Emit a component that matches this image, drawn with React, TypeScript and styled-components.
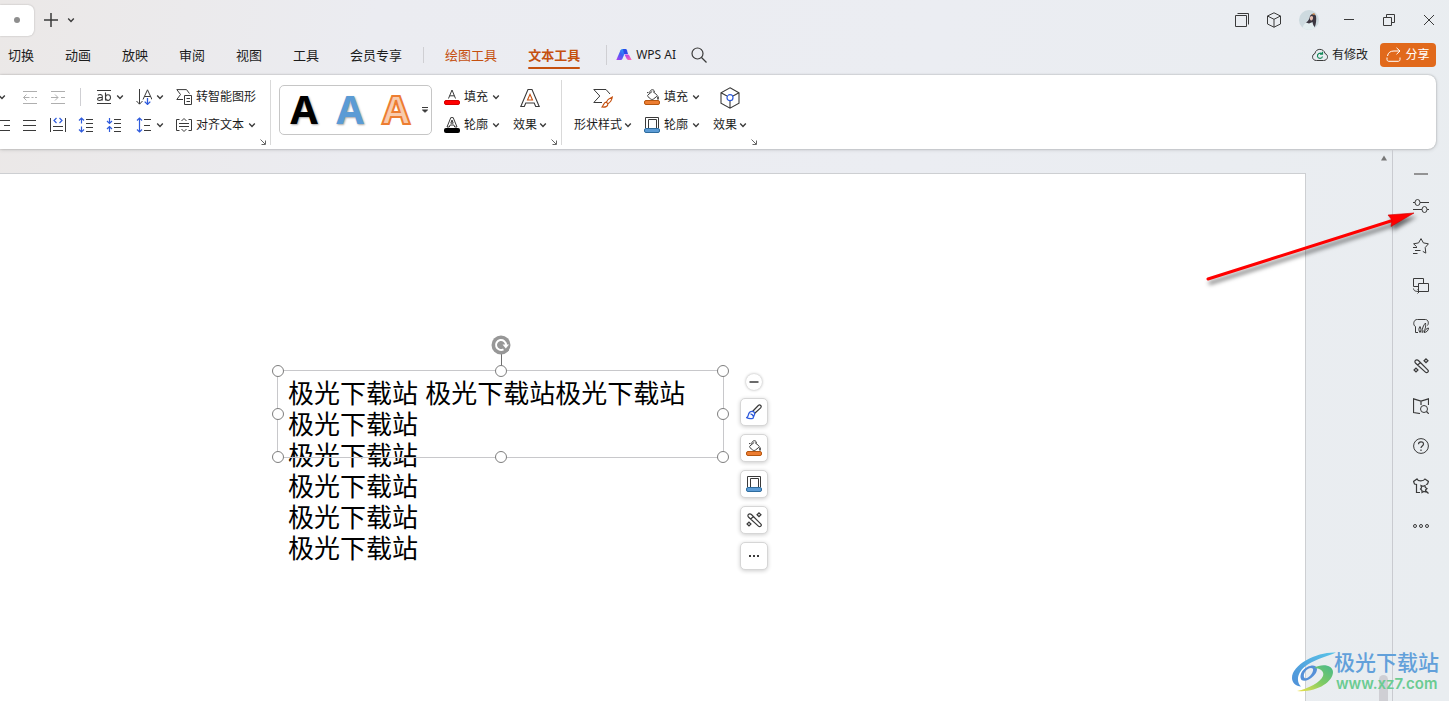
import React from "react";
import styled, { createGlobalStyle, css } from "styled-components";

const GlobalStyle = createGlobalStyle`
  *, *::before, *::after { box-sizing: border-box; }
  html, body { margin: 0; height: 100%; }
  #root { height: 100%; }
  body {
    overflow: hidden;
    color: #1c1c1c;
    font: 12px/16px "Noto Sans", "Noto Sans CJK SC", sans-serif;
  }
  button { font: inherit; color: inherit; background: none; border: 0; padding: 0; }
`;

const ink = "#3a3a3a";
const blue = "#2f5bdc";
const rust = "#c5500f";

const Window = styled.div`
  display: flex;
  flex-direction: column;
  height: 100%;
  min-height: 600px;
  background: linear-gradient(100deg, #ebe8e7 0%, #ebecf1 24%, #ebedf2 60%, #e9edf0 100%);
`;

/* ---------- title bar ---------- */
const TitleBar = styled.header`
  display: flex;
  align-items: center;
  flex: none;
  height: 40px;
`;
const DocTab = styled.button`
  width: 34px;
  height: 31px;
  display: flex;
  align-items: center;
  justify-content: center;
  background: #fff;
  border-radius: 0 6px 6px 0;
  box-shadow: 0 0 2px rgba(0, 0, 0, 0.25);
  margin-right: 7px;
`;
const UnsavedDot = styled.span`
  width: 6px;
  height: 6px;
  border-radius: 50%;
  background: #8e8e8e;
`;
const BarButton = styled.button<{ $w: number }>`
  width: ${(p) => p.$w}px;
  height: 32px;
  display: flex;
  align-items: center;
  justify-content: center;
`;
const Spacer = styled.div`
  flex: 1;
`;

/* ---------- menu ---------- */
const MenuBar = styled.nav`
  display: flex;
  align-items: center;
  flex: none;
  height: 35px;
  padding: 0 13px 5px 8px;
  font-size: 13px;
`;
const MenuTabs = styled.div`
  display: flex;
  align-items: center;
  gap: 31px;
`;
const MenuTab = styled.button<{ $accent?: boolean; $active?: boolean }>`
  position: relative;
  height: 30px;
  white-space: nowrap;
  color: ${(p) => (p.$accent ? rust : "#1c1c1c")};
  ${(p) =>
    p.$active &&
    css`
      font-weight: 700;
      &::after {
        content: "";
        position: absolute;
        left: 0;
        right: 0;
        bottom: 1px;
        height: 2px;
        border-radius: 1px;
        background: ${rust};
      }
    `}
`;
const Rule = styled.span<{ $h: number; $l: number; $r: number }>`
  flex: none;
  width: 1px;
  height: ${(p) => p.$h}px;
  margin: 0 ${(p) => p.$r}px 0 ${(p) => p.$l}px;
  background: #cfcfd3;
`;
const MenuAction = styled.button`
  display: flex;
  align-items: center;
  gap: 4px;
  height: 24px;
  font-size: 12px;
  white-space: nowrap;
`;
const ShareButton = styled(MenuAction)`
  width: 56px;
  margin-left: 12px;
  justify-content: center;
  gap: 3px;
  color: #fff;
  background: #e1691b;
  border-radius: 4px;
`;

/* ---------- ribbon ---------- */
const Ribbon = styled.section`
  display: flex;
  flex: none;
  height: 74px;
  margin-right: 13px;
  padding-top: 5px;
  background: #fff;
  border-radius: 0 8px 8px 0;
  box-shadow: 0 0 2px rgba(0, 0, 0, 0.3), 0 1px 4px rgba(0, 0, 0, 0.12);
  overflow: hidden;
`;
const Group = styled.div<{ $line?: boolean }>`
  position: relative;
  display: flex;
  align-items: flex-start;
  flex: none;
  height: 65px;
  padding: 3px 8px 0 6px;
  border-right: 1px solid ${(p) => (p.$line ? "#d9d9d9" : "transparent")};
`;
const Rows = styled.div<{ $shift?: boolean }>`
  display: flex;
  flex-direction: column;
  margin: ${(p) => (p.$shift ? "0 0 0 -18px" : "0 1px 0 0")};
`;
const Row = styled.div`
  display: flex;
  align-items: center;
  height: 28px;
`;
const Cluster = styled.div`
  display: flex;
  align-items: center;
`;
const WideCluster = styled(Cluster)`
  margin-right: 2px;
`;
const Tool = styled.button<{ $only?: boolean; $muted?: boolean }>`
  display: flex;
  align-items: center;
  justify-content: ${(p) => (p.$only ? "center" : "flex-start")};
  gap: 4px;
  height: 26px;
  ${(p) => (p.$only ? "width: 28px;" : "padding: 0 6px;")}
  white-space: nowrap;
  opacity: ${(p) => (p.$muted ? 0.4 : 1)};
`;
const TallTool = styled.button`
  display: flex;
  flex-direction: column;
  align-items: center;
  height: 56px;
  padding: 3px 6px 0;
  gap: 7px;
  white-space: nowrap;
`;
const TallLabel = styled.span`
  display: flex;
  align-items: center;
  gap: 2px;
`;
const Launcher = styled.button`
  position: absolute;
  right: 3px;
  bottom: -1px;
  width: 8px;
  height: 8px;
  display: flex;
`;
const Gallery = styled.div`
  display: flex;
  align-items: center;
  height: 50px;
  margin: 2px 6px 0 2px;
  padding-left: 1px;
  border: 1px solid #c6c6c6;
  border-radius: 5px;
`;
const Preset = styled.button<{ $fill: string; $outline?: string }>`
  width: 46px;
  height: 48px;
  padding-bottom: 2px;
  font: 700 40px/46px "Noto Sans", sans-serif;
  text-align: center;
  color: ${(p) => p.$fill};
  text-shadow: ${(p) => (p.$outline ? "none" : "1px 1px 2px rgba(0,0,0,.35)")};
  -webkit-text-stroke: ${(p) => (p.$outline ? `2px ${p.$outline}` : "0")};
`;
const GalleryMore = styled.button`
  width: 12px;
  height: 48px;
  display: flex;
  align-items: center;
  justify-content: center;
`;

/* ---------- workspace ---------- */
const Workspace = styled.main`
  position: relative;
  display: flex;
  flex: 1;
  min-height: 0;
`;
const Slide = styled.div`
  position: relative;
  flex: 1;
  margin-top: 24px;
  background: #fff;
  border: solid #cdcfd2;
  border-width: 1px 1px 0 0;
`;
const ScrollLane = styled.div`
  width: 86px;
  display: flex;
  flex-direction: column;
  align-items: flex-end;
  justify-content: space-between;
  padding: 6px 4px 0 0;
`;
const ScrollUp = styled.button`
  width: 8px;
  height: 6px;
  display: flex;
`;
const Thumb = styled.span`
  width: 9px;
  height: 26px;
  background: #cfcfd4;
  border-radius: 5px 5px 0 0;
`;
const SidePanel = styled.aside`
  width: 57px;
  border-left: 1px solid #c9cbd0;
  display: flex;
  flex-direction: column;
  align-items: center;
  padding-top: 13px;
`;
const SideCollapse = styled.button`
  width: 24px;
  height: 24px;
  display: flex;
  align-items: center;
  justify-content: center;
`;
const SideButton = styled.button`
  width: 40px;
  height: 40px;
  display: flex;
  align-items: center;
  justify-content: center;
`;

const SlideText = styled.div`
  position: absolute;
  left: 288px;
  top: 205px;
  color: #000;
  font: 400 26px/31px "Liberation Sans", "Noto Sans CJK SC", sans-serif;
  white-space: nowrap;
`;
const Paragraph = styled.p`
  margin: 0;
`;
const Frame = styled.div`
  position: absolute;
  left: 277px;
  top: 196px;
  width: 447px;
  height: 88px;
  border: 1px solid #c8c8cb;
`;
const Handle = styled.span<{ $x: number; $y: number }>`
  position: absolute;
  left: ${(p) => p.$x}%;
  top: ${(p) => p.$y}%;
  width: 12px;
  height: 12px;
  margin: -6px;
  border: 1px solid #7e7e7e;
  border-radius: 50%;
  background: #fff;
`;
const RotateHandle = styled.button`
  position: absolute;
  left: 50%;
  top: -36px;
  width: 20px;
  height: 36px;
  margin-left: -10px;
  display: flex;
`;
const FloatBar = styled.div`
  position: absolute;
  left: 740px;
  top: 200px;
  display: flex;
  flex-direction: column;
  align-items: center;
  gap: 8px;
`;
const FloatCollapse = styled.button`
  width: 16px;
  height: 16px;
  display: flex;
  align-items: center;
  justify-content: center;
  background: #fff;
  border-radius: 50%;
  box-shadow: 0 0 3px rgba(0, 0, 0, 0.35);
`;
const FloatButton = styled.button`
  width: 28px;
  height: 28px;
  display: flex;
  align-items: center;
  justify-content: center;
  background: #fff;
  border: 1px solid #d6d6d6;
  border-radius: 5px;
  box-shadow: 0 1px 4px rgba(0, 0, 0, 0.2);
`;
const Pointer = styled.svg`
  position: absolute;
  right: 25px;
  top: 51px;
  pointer-events: none;
  filter: drop-shadow(2px 4px 2px rgba(0, 0, 0, 0.55));
`;
const Watermark = styled.a`
  position: absolute;
  right: 10px;
  bottom: 7px;
  display: flex;
  align-items: flex-end;
  text-decoration: none;
  white-space: nowrap;
`;
const WatermarkText = styled.span`
  display: flex;
  flex-direction: column;
  margin-left: -4px;
`;
const WatermarkName = styled.span`
  color: #62a0da;
  font: 500 21px/26px "Noto Sans CJK SC", sans-serif;
`;
const WatermarkSite = styled.span`
  padding-left: 2px;
  color: #6bcb92;
  font: 600 15px/20px Inter, sans-serif;
`;

/* ---------- icons ---------- */
type IconProps = { children: React.ReactNode; s?: number; box?: string; color?: string };
const Svg = styled.svg`
  flex: none;
`;
const Icon = ({ children, s = 16, box = "0 0 16 16", color = ink }: IconProps) => (
  <Svg width={s} height={s} viewBox={box} fill="none" stroke={color} strokeWidth={1} aria-hidden="true">
    {children}
  </Svg>
);
const Chevron = () => (
  <Icon s={8} box="0 0 8 8"><path d="M1.2 2.6 4 5.4 6.8 2.6" strokeWidth="1.4" /></Icon>
);
const OutdentIcon = () => <Icon><path d="M1 2.5h14M1 14.5h14M1.5 8.5h6M9.5 8.5h2M13 8.5h2M4.5 5.5l-3 3 3 3" /></Icon>;
const IndentIcon = () => <Icon><path d="M1 2.5h14M1 14.5h14M1 8.5h7M11 8.5h4M5 5.5l3 3-3 3" /></Icon>;
const ListCutIcon = () => <Icon><path d="M6 3.5h10M10 8.5h6M6 13.5h10" /></Icon>;
const LinesIcon = () => <Icon><path d="M1 3.5h13M1 8.5h13M1 13.5h13" /></Icon>;
const StrikeAbIcon = () => (
  <Icon>
    <path d="M1 1.5h14M1 14.5h14" />
    <path d="M2 6.4c1-1.2 4.3-1.2 4.3.8v4.3M6.3 8.5c-2-.2-4.700 0-4.700 1.500 0 2 3.700 2 4.700-.2M9.500 3.500v8M9.500 8.600c0-3.800 5-3.800 5 0s-5 3.700-5 0" strokeWidth="1.1" />
  </Icon>
);
const SortIcon = () => (
  <Icon>
    <path d="M3.500 0v15M.5 12l3 3.200 3-3.200M7 10.500 11.500.8 16 10.500M8.500 7.500h6" />
    <path d="M11.500 9v6.500M8.700 12.600l2.800 2.800 2.800-2.800" stroke={blue} strokeWidth="1.3" />
  </Icon>
);
const SmartIcon = () => (
  <Icon>
    <path d="M7 10.500H.8l3.700-5L.8.600h9.700l3 4" />
    <path d="M8.500 6.500h7v9h-7zM10.500 9.500h3.500M10.500 12.500h3.500" />
  </Icon>
);
const DistributeIcon = () => (
  <Icon>
    <path d="M.5 1v14M15.500 1v14M3 9.500h10M3 13.500h10" />
    <path d="M6.500 1 4 3.500 6.500 6M9.500 1 12 3.500 9.500 6" stroke={blue} strokeWidth="1.2" />
  </Icon>
);
const SpaceUpIcon = () => (
  <Icon>
    <path d="M8 2.500h7M8 6.500h7M8 10.500h7M8 14.500h7" />
    <path d="M3.500 1v5.500M1 3.500 3.500 1 6 3.500M3.500 9.500V15M1 12.500 3.500 15 6 12.500" stroke={blue} strokeWidth="1.2" />
  </Icon>
);
const SpaceDownIcon = () => (
  <Icon>
    <path d="M8 2.500h7M8 6.500h7M8 10.500h7M8 14.500h7" />
    <path d="M3.500 1v5.500M1 4 3.500 6.500 6 4M3.500 9.500V15M1 12 3.500 9.500 6 12" stroke={blue} strokeWidth="1.2" />
  </Icon>
);
const LineHeightIcon = () => (
  <Icon>
    <path d="M8 2.500h7M8 8.500h6M8 13.500h7" />
    <path d="M3.500 1v14M1 3.500 3.500 1 6 3.500M1 12.500 3.500 15 6 12.500" stroke={blue} strokeWidth="1.2" />
  </Icon>
);
const AlignTextIcon = () => (
  <Icon>
    <path d="M3.500 2.500h-3v11h3M12.500 2.500h3v11h-3M3 6.500h10M3 9.500h10M5.500 4 8 1.500 10.500 4M5.500 12 8 14.500 10.500 12" />
  </Icon>
);
const TextFillIcon = () => (
  <Icon>
    <path d="M4.500 9.500 8 1l3.500 8.500M5.700 6.800h4.600" />
    <rect x=".5" y="11.500" width="15" height="4" rx="1.500" fill="#f00" stroke="#d40000" />
  </Icon>
);
const TextOutlineIcon = () => (
  <Icon>
    <path d="M3 10 6.800.6h2.400L13 10h-2.300l-.8-2H6.100l-.8 2zM6.800 6.200 8 3l1.200 3.200z" />
    <rect x="0" y="11" width="16" height="5" rx="2" fill="#000" stroke="none" />
  </Icon>
);
const TextEffectIcon = () => (
  <Icon s={24} box="-2 -2 24 24">
    <path d="M.8 18.500 8 1.500h4l7.200 17h-3.500l-1.500-3.500H5.800l-1.500 3.500z" strokeWidth="1.100" />
    <path d="M7.500 12 10 6.300l2.500 5.700z" stroke={rust} strokeWidth="1.100" />
  </Icon>
);
const ShapeStyleIcon = () => (
  <Icon s={24} box="-2 -2 24 24">
    <path d="M9 14.500H.8l6-6.500-6-6.500H13l4 4.500" />
    <path d="M19.300 9c-2.500 1-5 3.300-6 5.200l1.600 1.500c2.100-1.200 4-4 4.400-6.700zM13.300 14.200c-2.300-.3-2.300 2.300-4.300 4.800 3 .5 6-.5 5.900-3.300" stroke={rust} strokeWidth="1.200" />
  </Icon>
);
const ShapeFillIcon = () => (
  <Icon>
    <path d="M9 2.600 12.800 5.800c.6.500.6 1 .1 1.500L9.500 10c-1 .7-2 .6-2.800 0L4 7.700c-.6-.6-.6-1.200 0-1.800L8.200 2.400M3 3.600h1.500M5.500 3.600C6.300 1.500 7.200.6 8.500.7c1.300.1 2 1.100 2 2.500" />
    <path d="M14 7.500v3" strokeWidth="1.600" />
    <rect x=".5" y="11.500" width="15" height="4" rx="1.500" fill="#ed7d31" stroke="#b5560f" />
  </Icon>
);
const ShapeOutlineIcon = () => (
  <Icon>
    <path d="M1.500 11V.5h13V11M4.500 11V2.500h8V11" />
    <rect x=".5" y="11.500" width="15" height="4" rx="1.500" fill="#5b9bd5" stroke="#2e6c9e" />
  </Icon>
);
const ShapeEffectIcon = () => (
  <Icon s={24} box="-1 -1 24 24">
    <path d="M11 .8 20 5.800v10.400l-9 5-9-5V5.800zM2 5.800l6 3.200M20 5.800 14 9M11 14v7" strokeWidth="1.100" />
    <circle cx="11" cy="10.700" r="3" stroke={blue} strokeWidth="1.200" />
  </Icon>
);
const LauncherIcon = () => <Icon s={8} box="0 0 8 8" color="#666"><path d="M1.500 1.500 6 6M2.500 6.500h4v-4" /></Icon>;
const WandIcon = () => (
  <Icon>
    <path d="M2.200 2.700c1-1.100 2.300-1.100 3.200-.2l9.300 9.300c.8.8.8 1.700.1 2.400s-1.600.7-2.400-.1L2.700 5.300c-.8-.8-1-1.700-.5-2.600zM4.800 7l2.400-2.400" strokeWidth="1.200" />
    <path d="m13 .9 1.900 1.900L13 4.700l-1.900-1.900zM3 10.100 4.900 12 3 13.900 1.100 12z" strokeWidth="1.300" />
  </Icon>
);
const BrushIcon = () => (
  <Icon>
    <path d="m6.500 7.500 5.800-6c.8-.7 1.700-.7 2.400 0s.6 1.600-.1 2.400L8.500 9.500" strokeWidth="1.200" />
    <path d="M6 7.300c1.700 0 2.700 1 2.700 2.700L7 14.300c-2 .5-4.500.4-6.300-.7 1.500-.6 1.500-2.300 2-3.800C3.200 8.200 4.500 7.300 6 7.300zM4.500 9.800c1.400.2 2.500 1.200 2.700 2.700" stroke={blue} strokeWidth="1.300" />
  </Icon>
);
const WpsAiIcon = () => (
  <svg width="16" height="14" viewBox="0 0 16 14" aria-hidden="true">
    <defs>
      <linearGradient id="aiA" x1="0" y1="1" x2="1" y2="0"><stop offset="0" stopColor="#b43bf0" /><stop offset=".5" stopColor="#3b62f5" /><stop offset="1" stopColor="#26b8f5" /></linearGradient>
      <linearGradient id="aiB" x1="0" y1="0" x2="1" y2="1"><stop offset="0" stopColor="#b03cf0" /><stop offset="1" stopColor="#ff6fae" /></linearGradient>
    </defs>
    <path d="M4.500 2.300C5 1.300 5.800 1 7 1h3.500L6.300 11c-.3.700-.8 1-1.500 1H.3z" fill="url(#aiA)" />
    <path d="M7 1h2.300c.8 0 1.300.4 1.600 1.200L12 6H8z" fill="#2d49e8" />
    <path d="M8.500 6.500h3.200c.8 0 1.300.4 1.600 1.100L15.700 12h-3.200c-1 0-1.600-.5-2-1.400z" fill="url(#aiB)" />
  </svg>
);
const Avatar = () => (
  <svg width="20" height="20" viewBox="0 0 20 20" aria-hidden="true">
    <defs><clipPath id="face"><circle cx="10" cy="10" r="10" /></clipPath></defs>
    <g clipPath="url(#face)">
      <path d="M0 0h20v20H0z" fill="#cddadf" />
      <path d="M3 20c1-6 4-8 7-8l5 2v6z" fill="#e3eef0" />
      <path d="M11 6c1-2.500 5-3 6 0 .6 3 .1 8-1.200 11-1.500-1-2-3.500-2.300-5l-3.500 1.500-3-1c2-1 3.500-3.500 4-6.500z" fill="#3b3640" />
      <path d="M11 7c1-1.500 2.600-1.500 3 0s-.5 3-1.500 3.500S10.500 9 11 7z" fill="#e7bfb0" />
      <path d="m13 4 2-1 1.500 1.500-2 .5z" fill="#c8874e" />
    </g>
  </svg>
);
const WatermarkLogo = () => (
  <svg width="46" height="42" viewBox="0 0 46 42" aria-hidden="true">
    <defs>
      <linearGradient id="wmBlue" x1="0" y1="1" x2="1" y2="0"><stop offset="0" stopColor="#4f8fd8" /><stop offset="1" stopColor="#58c4e8" /></linearGradient>
      <linearGradient id="wmGreen" x1="0" y1="1" x2="1" y2="0"><stop offset="0" stopColor="#f0e24c" /><stop offset=".5" stopColor="#7fcb63" /><stop offset="1" stopColor="#48b98c" /></linearGradient>
    </defs>
    <path d="M44 .5C26-.5 0 12 0 26c0 5 4 8 9 8.500C4 30 5 21 13 14.500 21 8 33 5 44 .5z" fill="url(#wmBlue)" />
    <path fillRule="evenodd" d="M9.500 28C6 22 13 13.500 21 13.500c6 .5 4.500 7 .5 10.500-4 4-9 6-12 4zm3-2c2 1 5-1 7-4s2.500-6-.5-6c-4 0-9 6-6.500 10z" fill="#5590d8" />
    <path d="M22 16c8-5 19-3 19 4 0 10-17 21-36 19 12-2.500 23-8.500 26-15 1.500-4-2-8-9-8z" fill="url(#wmGreen)" />
  </svg>
);

const sideTools: { name: string; icon: React.ReactNode }[] = [
  { name: "属性", icon: <Icon><path d="M0 4.500h2M7 4.500h9M0 11.500h9M14 11.500h2" strokeWidth="1.200" /><ellipse cx="4.500" cy="4.500" rx="2.500" ry="3" /><ellipse cx="11.500" cy="11.500" rx="2.500" ry="3" /></Icon> },
  { name: "动画", icon: <Icon><path d="M3.700 8.700.6 5.800l5-.9L8 .6l2.400 4.300 5 .9-3.200 3.800.6 5.500-3-1.700M0 9.500h4M2 12.500h5.500M0 15.500h4.500" /></Icon> },
  { name: "切换", icon: <Icon><path d="M5 8.500H.5V.5h10V5M5.500 5.500h10v8h-10zM.5 10.500c.3 2.300 1.500 3 6 3M4.500 11.500l2 2-2 2" /></Icon> },
  { name: "模板", icon: <Icon><path d="M5 14.500H2.500v-6C-.5 7.500.5 1 4.500 1.500h8c3 .2 3.500 4 2 6" /><path d="M7 14.500c-1.500-2-1.500-4 0-6 1 2 1.500 4 0 6zM9 14.500c0-4 1.500-7.500 3.500-9.500.5 4 0 7-3.500 9.500zM11 14.500c1-2.500 2.500-4.200 4.500-4.500-.2 2.500-1.500 4.200-4.500 4.500z" /></Icon> },
  { name: "美化", icon: <WandIcon /> },
  { name: "查阅", icon: <Icon><path d="M7 15.500.5 14.500V.8L8 3l7.500-2.200V7M8 3v4" strokeWidth="1.200" /><circle cx="11" cy="11" r="3.500" /><path d="m13.500 13.500 2.300 2.300" strokeWidth="1.200" /></Icon> },
  { name: "帮助", icon: <Icon><circle cx="8" cy="8" r="7.400" /><path d="M5.500 6.300c0-3.300 5-3.300 5-.3 0 2-2.500 2-2.500 4M8 11.500v1.400" strokeWidth="1.200" /></Icon> },
  { name: "皮肤", icon: <Icon><path d="M7 14.500H3.500V6.500L1.500 6 .5 3.500 4 1c1 2.500 6.500 2.500 8 0l3.500 2.500-1 2.500-1.500.5" strokeWidth="1.200" /><path d="m8 7.500 2 .8 2-.8.3 2L14 10.500 12.500 12l.3 2-2-.5-1.800 1v-2L7.500 11l1-1.200zM13 13l2.500 2.500" strokeWidth="1.200" /></Icon> },
  { name: "更多", icon: <Icon><circle cx="2" cy="8" r="1.500" /><circle cx="8" cy="8" r="1.500" /><circle cx="14" cy="8" r="1.500" /></Icon> },
];

const floatTools = [
  { name: "样式", icon: <BrushIcon /> },
  { name: "填充", icon: <ShapeFillIcon /> },
  { name: "轮廓", icon: <ShapeOutlineIcon /> },
  { name: "美化", icon: <WandIcon /> },
  { name: "更多", icon: <Icon><path d="M3 8h2M7 8h2M11 8h2" strokeWidth="1.800" /></Icon> },
];

const tabs = ["切换", "动画", "放映", "审阅", "视图", "工具", "会员专享"];
const lines = ["极光下载站 极光下载站极光下载站", "极光下载站", "极光下载站", "极光下载站", "极光下载站", "极光下载站"];
const handles = [[0, 0], [50, 0], [100, 0], [0, 50], [100, 50], [0, 100], [50, 100], [100, 100]];

export default function App() {
  return (
    <Window>
      <GlobalStyle />
      <TitleBar>
        <DocTab aria-label="文档"><UnsavedDot /></DocTab>
        <BarButton $w={20} aria-label="新建"><Icon><path d="M8 1v14M1 8h14" strokeWidth="1.500" /></Icon></BarButton>
        <BarButton $w={20} aria-label="标签列表"><Chevron /></BarButton>
        <Spacer />
        <BarButton $w={34} aria-label="窗口"><Icon><path d="M1.500 3.500h11v11h-11zM3.500 1.500h11v11" /></Icon></BarButton>
        <BarButton $w={30} aria-label="应用"><Icon><path d="M8 .8 14.500 4v8L8 15.200 1.500 12V4zM1.500 4 8 7.300 14.500 4M8 7.300v8" /></Icon></BarButton>
        <BarButton $w={40} aria-label="账户"><Avatar /></BarButton>
        <BarButton $w={40} aria-label="最小化"><Icon><path d="M3 7.500h10" /></Icon></BarButton>
        <BarButton $w={40} aria-label="还原"><Icon><path d="M2.500 5.500h8v8h-8zM5.500 5.500v-3h8v8h-3" /></Icon></BarButton>
        <BarButton $w={40} aria-label="关闭"><Icon><path d="m3 3 10 10M13 3 3 13" /></Icon></BarButton>
      </TitleBar>

      <MenuBar>
        <MenuTabs>
          {tabs.map((t) => <MenuTab key={t}>{t}</MenuTab>)}
        </MenuTabs>
        <Rule $h={16} $l={21} $r={21} />
        <MenuTabs>
          <MenuTab $accent>绘图工具</MenuTab>
          <MenuTab $accent $active>文本工具</MenuTab>
        </MenuTabs>
        <Rule $h={20} $l={26} $r={9} />
        <MenuAction><WpsAiIcon />WPS AI</MenuAction>
        <BarButton $w={46} aria-label="搜索">
          <Icon><circle cx="6.500" cy="6.500" r="5.500" strokeWidth="1.200" /><path d="m10.500 10.500 5 5" strokeWidth="1.300" /></Icon>
        </BarButton>
        <Spacer />
        <MenuAction>
          <Icon><path d="M4.500 13.500C-.5 13.500-.5 7.500 3 6.500c.5-5.500 9-5.500 10 0 4 1.500 3 7-1.500 7z" /><path d="M10.300 6.800C8 5 5 7 5.500 9.500c.5 2.300 4.500 2.500 5 0M10.500 4.800v2.400H8" stroke="#178a5c" strokeWidth="1.200" /></Icon>
          有修改
        </MenuAction>
        <ShareButton>
          <Icon color="#fff"><path d="M1 10.500v2c0 1 .7 1.800 1.800 1.800h9.500c1 0 1.700-.8 1.700-1.800v-2M1.500 9c.5-3.500 3-5 6.500-5h6M10.500 .8 14 4l-3.500 3.300" /></Icon>
          分享
        </ShareButton>
      </MenuBar>

      <Ribbon>
        <Group $line>
          <Rows $shift>
            <Row>
              <Cluster>
                <Tool $only aria-label="编号"><Chevron /></Tool>
                <Tool $only $muted aria-label="减少缩进"><OutdentIcon /></Tool>
                <Tool $only $muted aria-label="增加缩进"><IndentIcon /></Tool>
                <Rule $h={18} $l={8} $r={9} />
              </Cluster>
              <Tool aria-label="字符间距"><StrikeAbIcon /><Chevron /></Tool>
              <Tool aria-label="文字方向"><SortIcon /><Chevron /></Tool>
              <Tool><SmartIcon />转智能图形</Tool>
            </Row>
            <Row>
              <WideCluster>
                <Tool $only aria-label="右对齐"><ListCutIcon /></Tool>
                <Tool $only aria-label="两端对齐"><LinesIcon /></Tool>
                <Tool $only aria-label="分散对齐"><DistributeIcon /></Tool>
                <Tool $only aria-label="增大段距"><SpaceUpIcon /></Tool>
                <Tool $only aria-label="减小段距"><SpaceDownIcon /></Tool>
              </WideCluster>
              <Tool aria-label="行距"><LineHeightIcon /><Chevron /></Tool>
              <Tool><AlignTextIcon />对齐文本<Chevron /></Tool>
            </Row>
          </Rows>
          <Launcher aria-label="段落设置"><LauncherIcon /></Launcher>
        </Group>

        <Group $line>
          <Gallery>
            <Preset $fill="#000">A</Preset>
            <Preset $fill="#5b9bd5">A</Preset>
            <Preset $fill="#f8cbad" $outline="#ed7d31">A</Preset>
            <GalleryMore aria-label="更多样式">
              <Icon s={8} box="0 0 8 8"><path d="M1 1.500h6M1.500 4 4 6.300 6.500 4z" fill={ink} /></Icon>
            </GalleryMore>
          </Gallery>
          <Rows>
            <Row><Tool><TextFillIcon />填充<Chevron /></Tool></Row>
            <Row><Tool><TextOutlineIcon />轮廓<Chevron /></Tool></Row>
          </Rows>
          <TallTool>
            <TextEffectIcon />
            <TallLabel>效果<Chevron /></TallLabel>
          </TallTool>
          <Launcher aria-label="文本设置"><LauncherIcon /></Launcher>
        </Group>

        <Group>
          <TallTool>
            <ShapeStyleIcon />
            <TallLabel>形状样式<Chevron /></TallLabel>
          </TallTool>
          <Rows>
            <Row><Tool><ShapeFillIcon />填充<Chevron /></Tool></Row>
            <Row><Tool><ShapeOutlineIcon />轮廓<Chevron /></Tool></Row>
          </Rows>
          <TallTool>
            <ShapeEffectIcon />
            <TallLabel>效果<Chevron /></TallLabel>
          </TallTool>
          <Launcher aria-label="形状设置"><LauncherIcon /></Launcher>
        </Group>
      </Ribbon>

      <Workspace>
        <Slide>
          <SlideText>
            {lines.map((l, i) => <Paragraph key={i}>{l}</Paragraph>)}
          </SlideText>
          <Frame>
            <RotateHandle aria-label="旋转">
              <svg width="20" height="36" viewBox="0 0 20 36" fill="none">
                <path d="M10.500 19v12" stroke="#6f6f6f" />
                <circle cx="10" cy="10" r="9.500" fill="#979797" />
                <path d="M12.500 14.300A5 5 0 1 1 15 10" stroke="#fff" strokeWidth="2" />
                <path d="M11.500 9.500h6.500L14.800 13.500z" fill="#fff" />
              </svg>
            </RotateHandle>
            {handles.map(([x, y]) => <Handle key={`${x}-${y}`} $x={x} $y={y} />)}
          </Frame>
          <FloatBar>
            <FloatCollapse aria-label="收起"><Icon s={10} box="0 0 10 10"><path d="M.5 5h9" strokeWidth="1.500" /></Icon></FloatCollapse>
            {floatTools.map((t) => <FloatButton key={t.name} aria-label={t.name}>{t.icon}</FloatButton>)}
          </FloatBar>
        </Slide>
        <ScrollLane>
          <ScrollUp aria-label="向上滚动"><svg width="8" height="6" viewBox="0 0 8 6"><path d="M4 .5 7 5.500H1z" fill="#777" /></svg></ScrollUp>
          <Thumb />
        </ScrollLane>
        <SidePanel>
          <SideCollapse aria-label="收起"><Icon color="#8a8a8a"><path d="M1 8h14" strokeWidth="1.800" /></Icon></SideCollapse>
          {sideTools.map((t) => <SideButton key={t.name} aria-label={t.name}>{t.icon}</SideButton>)}
        </SidePanel>
        <Pointer width="220" height="90" viewBox="0 0 220 90">
          <path d="M4 79 190 20" stroke="#f00" strokeWidth="3" strokeLinecap="round" />
          <path d="M210 13 184 15l4 5-1 6.500z" fill="#f00" stroke="#c00" strokeWidth=".6" />
        </Pointer>
        <Watermark href="#">
          <WatermarkLogo />
          <WatermarkText>
            <WatermarkName>极光下载站</WatermarkName>
            <WatermarkSite>www.xz7.com</WatermarkSite>
          </WatermarkText>
        </Watermark>
      </Workspace>
    </Window>
  );
}
